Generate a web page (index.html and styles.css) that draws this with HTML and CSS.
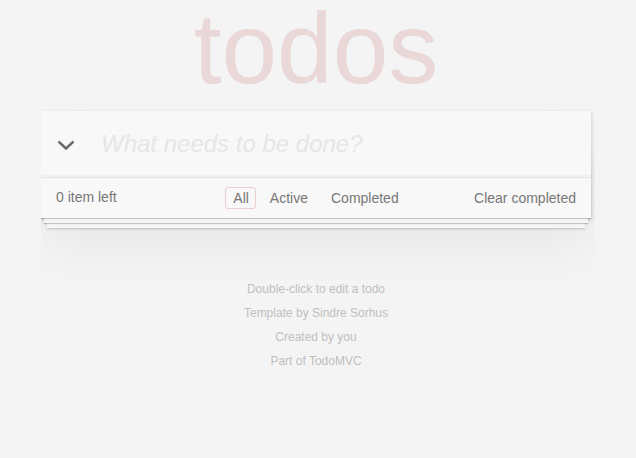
FILE: index.html
```html
<!DOCTYPE html>
<html lang="en">
<head>
<meta charset="utf-8">
<title>TodoMVC</title>
<link rel="stylesheet" href="styles.css">
</head>
<body>
<section class="todoapp">
  <header class="header">
    <h1 class="title">todos</h1>
    <div class="new-row">
      <span class="toggle-all">
        <svg width="18" height="11" viewBox="0 0 18 11"><polyline points="1.5,1.5 9,8.5 16.5,1.5" fill="none" stroke="#6b6b6b" stroke-width="2.4"/></svg>
      </span>
      <input class="new-todo" placeholder="What needs to be done?">
    </div>
  </header>
  <footer class="footer">
    <span class="todo-count">0 item left</span>
    <ul class="filters">
      <li><a class="filter selected">All</a></li>
      <li><a class="filter">Active</a></li>
      <li><a class="filter">Completed</a></li>
    </ul>
    <button class="clear-completed">Clear completed</button>
  </footer>
</section>
<footer class="info">
  <p>Double-click to edit a todo</p>
  <p>Template by Sindre Sorhus</p>
  <p>Created by you</p>
  <p>Part of TodoMVC</p>
</footer>
</body>
</html>
```
FILE: styles.css
```css
html, body { padding: 0; }
html { background: #f4f4f4; }
body {
  font: 14px "Liberation Sans", Arial, sans-serif;
  line-height: 1.4em;
  color: #4d4d4d;
  max-width: 550px;
  margin: 0 auto;
  padding-right: 4px;
  background: #f4f4f4;
}
.todoapp {
  background: #f8f8f8;
  margin: 111px 0 40px 0;
  position: relative;
  box-shadow: 0 2px 4px rgba(0,0,0,0.2), 0 25px 50px 0 rgba(0,0,0,0.06);
}
.title {
  position: absolute;
  top: -111px;
  left: 0;
  right: 0;
  margin: 0;
  font-size: 100px;
  line-height: 96px;
  font-weight: normal;
  text-align: center;
  color: #ead7d7;
}
.new-row {
  display: flex;
  align-items: center;
  height: 66px;
  box-shadow: inset 0 -2px 1px rgba(0,0,0,0.03);
}
.toggle-all {
  width: 60px;
  display: flex;
  justify-content: center;
  padding-top: 3px;
  padding-right: 10px;
  box-sizing: border-box;
}
.new-todo {
  flex: 1;
  border: none;
  background: transparent;
  outline: none;
  padding: 0 16px 0 0;
  font: italic 24px "Liberation Sans", Arial, sans-serif;
  color: #4d4d4d;
}
.new-todo::placeholder { color: #e6e6e6; font-style: italic; }
.footer {
  color: #777;
  padding: 10px 15px;
  height: 20px;
  border-top: 1px solid #e6e6e6;
  display: flex;
  align-items: center;
  position: relative;
}
.footer::before {
  content: '';
  position: absolute;
  right: 0; bottom: 0; left: 0;
  height: 50px;
  overflow: hidden;
  box-shadow: 0 1px 1px rgba(0,0,0,0.2), 0 8px 0 -3px #f6f6f6, 0 9px 1px -3px rgba(0,0,0,0.2), 0 16px 0 -6px #f6f6f6, 0 17px 2px -6px rgba(0,0,0,0.2);
  z-index: 0;
}
.todo-count { position: relative; z-index: 1; }
.filters {
  list-style: none;
  margin: 0;
  padding: 0 2px 0 0;
  position: absolute;
  left: 0; right: 0;
  display: flex;
  justify-content: center;
  z-index: 1;
}
.filter {
  display: block;
  margin: 3px;
  padding: 1px 7px;
  border: 1px solid transparent;
  border-radius: 3px;
  line-height: 18px;
}
.filter.selected { border-color: rgba(175,47,47,0.2); padding: 1px 6px 1px 7px; }
.filters li:first-child .filter { margin-left: 5px; }
.filters li:nth-child(2) .filter { margin-left: 3px; }
.filters li:nth-child(3) .filter { margin-left: 4px; }
.clear-completed {
  margin-left: auto;
  border: none;
  background: none;
  padding: 0;
  font: 14px "Liberation Sans", Arial, sans-serif;
  color: #777;
  position: relative;
  z-index: 1;
}
.info {
  margin: 65px auto 0;
  color: #bfbfbf;
  font-size: 12px;
  text-align: center;
}
.info p { line-height: 1; margin: 12px 0; }
```
